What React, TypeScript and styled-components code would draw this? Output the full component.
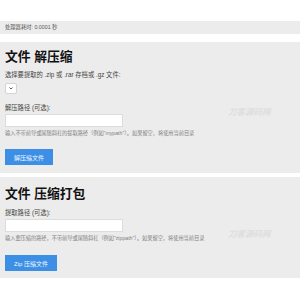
import React from "react";
import styled, { createGlobalStyle } from "styled-components";

const Global = createGlobalStyle`
  html, body {
    margin: 0;
    padding: 0;
    background: #ffffff;
    font-family: "Liberation Sans", "Noto Sans CJK SC", sans-serif;
    color: #333;
  }
`;

const Page = styled.div`
  width: 300px;
  height: 300px;
  padding-top: 21px;
  box-sizing: border-box;
  display: flex;
  flex-direction: column;
`;

const TimerBar = styled.div`
  height: 13px;
  background: #ececec;
  padding-left: 5px;
  font-size: 5.3px;
  line-height: 13px;
  color: #555;
  margin-bottom: 8px;
`;

const Panel = styled.section<{ $height: number; $padTop: number }>`
  position: relative;
  height: ${(p) => p.$height}px;
  box-sizing: border-box;
  background: #ececec;
  padding: ${(p) => p.$padTop}px 5px 0 5px;
  margin-bottom: 4px;
  display: flex;
  flex-direction: column;
  align-items: flex-start;
`;

const Title = styled.h2`
  margin: 0;
  font-size: 12.8px;
  line-height: 14px;
  font-weight: 700;
  color: #111;
`;

const Label = styled.div<{ $top: number }>`
  margin-top: ${(p) => p.$top}px;
  font-size: 6.3px;
  line-height: 6px;
  color: #444;
  white-space: nowrap;
`;

const Select = styled.div`
  margin-top: 5px;
  width: 12px;
  height: 11px;
  box-sizing: border-box;
  background: #fff;
  border: 1px solid #d4d4d4;
  border-radius: 2px;
  display: flex;
  align-items: center;
  justify-content: center;
  svg {
    display: block;
  }
`;

const Input = styled.div<{ $top: number; $h: number }>`
  margin-top: ${(p) => p.$top}px;
  width: 118px;
  height: ${(p) => p.$h}px;
  box-sizing: border-box;
  background: #fff;
  border: 1px solid #dcdcdc;
`;

const Help = styled.div`
  margin-top: 3px;
  font-size: 5.2px;
  line-height: 6px;
  color: #808080;
  white-space: nowrap;
`;

const Button = styled.div<{ $top: number; $w: number }>`
  margin-top: ${(p) => p.$top}px;
  width: ${(p) => p.$w}px;
  height: 16px;
  background: #3c8fe4;
  color: #f2f8fe;
  font-size: 6px;
  display: flex;
  align-items: center;
  justify-content: center;
`;

const Watermark = styled.div<{ $top: number }>`
  position: absolute;
  left: 228px;
  top: ${(p) => p.$top}px;
  font-size: 8.5px;
  line-height: 9px;
  font-weight: 700;
  font-style: italic;
  color: #dedede;
  white-space: nowrap;
`;

export default function App() {
  return (
    <>
      <Global />
      <Page>
        <TimerBar>处理器耗时: 0.0001 秒</TimerBar>

        <Panel $height={131} $padTop={8}>
          <Title>文件 解压缩</Title>
          <Label $top={8}>选择要提取的 .zip 或 .rar 存档或 .gz 文件:</Label>
          <Select>
            <svg width="4" height="3" viewBox="0 0 4 3">
              <path d="M0.5 0.5 L2 2 L3.5 0.5" stroke="#333" strokeWidth="0.8" fill="none" />
            </svg>
          </Select>
          <Label $top={11}>解压路径 (可选):</Label>
          <Input $top={3} $h={13} />
          <Help>输入不带前导或尾随斜杠的提取路径（例如"mypath"）。如果留空，将使用当前目录</Help>
          <Button $top={13} $w={48}>解压缩文件</Button>
          <Watermark $top={66}>刀客源码网</Watermark>
        </Panel>

        <Panel $height={101} $padTop={10}>
          <Title>文件 压缩打包</Title>
          <Label $top={9}>提取路径 (可选):</Label>
          <Input $top={3} $h={13} />
          <Help>输入要压缩的路径，不带前导或尾随斜杠（例如"zippath"）。如果留空，将使用当前目录</Help>
          <Button $top={14} $w={52}>Zip 压缩文件</Button>
          <Watermark $top={53}>刀客源码网</Watermark>
        </Panel>
      </Page>
    </>
  );
}
